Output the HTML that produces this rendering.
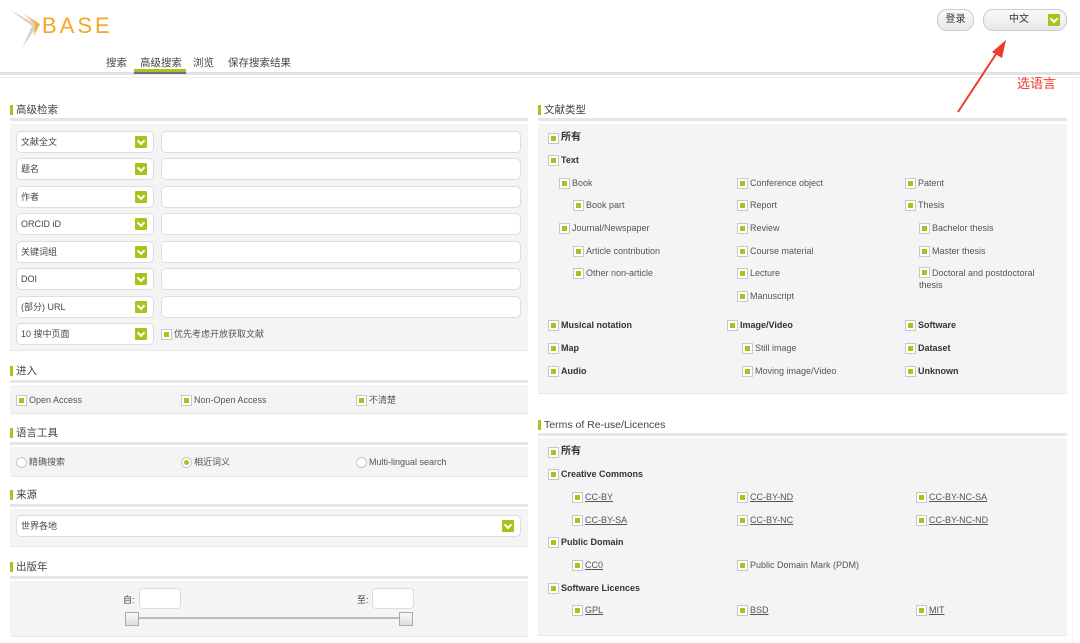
<!DOCTYPE html>
<html><head><meta charset="utf-8"><style>
*{margin:0;padding:0;box-sizing:border-box}
body{width:1080px;height:643px;position:relative;overflow:hidden;background:#fff;font-family:"Liberation Sans","Noto Sans CJK SC",sans-serif;color:#444;font-size:9px}
.a{position:absolute;white-space:nowrap}
.t{position:absolute;font-size:10.5px;color:#444;padding-left:6px;line-height:12px}
.t:before{content:"";position:absolute;left:0;top:1px;width:3px;height:10px;background:#a8c41c}
.band{position:absolute;height:3px;background:#e6e6e6}
.pan{position:absolute;background:#f4f4f4;border-bottom:1px solid #e8e8e8}
.sel{position:absolute;left:16px;width:138px;height:22px;background:#fff;border:1px solid #ddd;border-radius:5px;font-size:9px;line-height:20px;padding-left:4px;color:#444}
.sel i,.dd{position:absolute;right:6px;top:4px;width:12px;height:12px;background:#a8c41c;border-radius:1px}
.sel i:after,.dd:after{content:"";position:absolute;left:3px;top:2px;width:4px;height:4px;border-right:2px solid #fff;border-bottom:2px solid #fff;transform:rotate(45deg)}
.inp{position:absolute;left:161px;width:360px;height:22px;background:#fff;border:1px solid #ddd;border-radius:5px}
.c{position:absolute;white-space:nowrap;padding-left:13px;line-height:10px;font-size:9px;color:#555}
.c:before{content:"";position:absolute;left:0;top:0;width:9px;height:9px;border:1px solid #c8c8c8;background:#fff}
.c:after{content:"";position:absolute;left:3px;top:3px;width:5px;height:5px;background:#a8c41c}
.b{font-weight:bold;color:#333}
.u{text-decoration:underline}
.r{position:absolute;white-space:nowrap;padding-left:13px;line-height:10px;font-size:9px;color:#555}
.r:before{content:"";position:absolute;left:0;top:0;width:9px;height:9px;border:1px solid #c8c8c8;border-radius:50%;background:#fff}
.r.on:after{content:"";position:absolute;left:3px;top:3px;width:5px;height:5px;border-radius:50%;background:#a8c41c}
.btn{position:absolute;background:linear-gradient(#fafafa,#e8e8e8);border:1px solid #ccc;border-radius:10px;font-size:10px;color:#333;text-align:center;line-height:20px}
.yi{position:absolute;width:42px;height:21px;background:#fff;border:1px solid #ddd;border-radius:4px}
.h{position:absolute;width:14px;height:14px;border:1px solid #aaa;background:linear-gradient(#fafafa,#ddd)}
</style></head><body>
<!-- logo -->
<svg class="a" style="left:8px;top:8px" width="36" height="42" viewBox="0 0 36 42">
<polygon points="2,2 30,17 14,40 24,18" fill="#d4d4d4"/>
<polygon points="16,6 32,16 26,28 27,16" fill="#f5a623" opacity=".85"/>
</svg>
<div class="a" style="left:42px;top:13px;font-size:22px;color:#f5a623;letter-spacing:3px;font-family:'Liberation Sans',sans-serif">BASE</div>
<div class="a" style="left:106px;top:55px;font-size:10.5px;color:#444">搜索</div>
<div class="a" style="left:140px;top:55px;font-size:10.5px;color:#444">高级搜索</div>
<div class="a" style="left:193px;top:55px;font-size:10.5px;color:#444">浏览</div>
<div class="a" style="left:228px;top:55px;font-size:10.5px;color:#444">保存搜索结果</div>
<div class="a" style="left:134px;top:69px;width:52px;height:3px;background:#a8c41c"></div>
<div class="a" style="left:0;top:72px;width:1080px;height:3px;background:#e3e3e3"></div>
<div class="a" style="left:134px;top:72px;width:52px;height:2px;background:#6b7280"></div>
<div class="a" style="left:0;top:77px;width:1080px;height:1px;background:#eee"></div>
<div class="btn" style="left:937px;top:9px;width:37px;height:22px">登录</div>
<div class="btn" style="left:983px;top:9px;width:84px;height:22px;padding-right:12px">中文<span class="dd" style="top:4px;right:6px"></span></div>
<svg class="a" style="left:950px;top:36px" width="70" height="80"><line x1="8" y1="76" x2="50" y2="12" stroke="#f03a2a" stroke-width="2"/><polygon points="56,4 52,22 42,16" fill="#f03a2a"/></svg>
<div class="a" style="left:1017px;top:73px;font-size:13px;color:#f03a2a">选语言</div>
<div class="a" style="left:1072px;top:78px;width:1px;height:565px;background:#f2f2f2"></div>

<!-- left: advanced -->
<div class="t" style="left:10px;top:104px">高级检索</div>
<div class="band" style="left:10px;top:118px;width:518px"></div>
<div class="pan" style="left:10px;top:124px;width:518px;height:227px"></div>
<div class="sel" style="top:131px">文献全文<i></i></div><div class="inp" style="top:131px"></div>
<div class="sel" style="top:158px">题名<i></i></div><div class="inp" style="top:158px"></div>
<div class="sel" style="top:186px">作者<i></i></div><div class="inp" style="top:186px"></div>
<div class="sel" style="top:213px">ORCID iD<i></i></div><div class="inp" style="top:213px"></div>
<div class="sel" style="top:241px">关键词组<i></i></div><div class="inp" style="top:241px"></div>
<div class="sel" style="top:268px">DOI<i></i></div><div class="inp" style="top:268px"></div>
<div class="sel" style="top:296px">(部分) URL<i></i></div><div class="inp" style="top:296px"></div>
<div class="sel" style="top:323px">10 搜中页面<i></i></div>
<div class="c" style="left:161px;top:329px">优先考虑开放获取文献</div>

<div class="t" style="left:10px;top:365px">进入</div>
<div class="band" style="left:10px;top:380px;width:518px"></div>
<div class="pan" style="left:10px;top:385px;width:518px;height:29px"></div>
<div class="c" style="left:16px;top:395px">Open Access</div>
<div class="c" style="left:181px;top:395px">Non-Open Access</div>
<div class="c" style="left:356px;top:395px">不清楚</div>

<div class="t" style="left:10px;top:427px">语言工具</div>
<div class="band" style="left:10px;top:442px;width:518px"></div>
<div class="pan" style="left:10px;top:447px;width:518px;height:30px"></div>
<div class="r" style="left:16px;top:457px">精确搜索</div>
<div class="r on" style="left:181px;top:457px">相近词义</div>
<div class="r" style="left:356px;top:457px">Multi-lingual search</div>

<div class="t" style="left:10px;top:489px">来源</div>
<div class="band" style="left:10px;top:504px;width:518px"></div>
<div class="pan" style="left:10px;top:509px;width:518px;height:38px"></div>
<div class="sel" style="top:515px;width:505px">世界各地<i></i></div>

<div class="t" style="left:10px;top:561px">出版年</div>
<div class="band" style="left:10px;top:576px;width:518px"></div>
<div class="pan" style="left:10px;top:581px;width:518px;height:56px"></div>
<div class="a" style="left:123px;top:593px;font-size:9px">自:</div>
<div class="yi" style="left:139px;top:588px"></div>
<div class="a" style="left:357px;top:593px;font-size:9px">至:</div>
<div class="yi" style="left:372px;top:588px"></div>
<div class="a" style="left:132px;top:617px;width:270px;height:2px;background:#bbb"></div>
<div class="h" style="left:125px;top:612px"></div>
<div class="h" style="left:399px;top:612px"></div>

<!-- right -->
<div class="t" style="left:538px;top:104px">文献类型</div>
<div class="band" style="left:538px;top:118px;width:529px"></div>
<div class="pan" style="left:538px;top:124px;width:529px;height:270px"></div>
<div class="c b" style="left:548px;top:133px;font-size:10px;line-height:10px">所有</div>
<div class="c b" style="left:548px;top:155px">Text</div>
<div class="c" style="left:559px;top:178px">Book</div>
<div class="c" style="left:737px;top:178px">Conference object</div>
<div class="c" style="left:905px;top:178px">Patent</div>
<div class="c" style="left:573px;top:200px">Book part</div>
<div class="c" style="left:737px;top:200px">Report</div>
<div class="c" style="left:905px;top:200px">Thesis</div>
<div class="c" style="left:559px;top:223px">Journal/Newspaper</div>
<div class="c" style="left:737px;top:223px">Review</div>
<div class="c" style="left:919px;top:223px">Bachelor thesis</div>
<div class="c" style="left:573px;top:246px">Article contribution</div>
<div class="c" style="left:737px;top:246px">Course material</div>
<div class="c" style="left:919px;top:246px">Master thesis</div>
<div class="c" style="left:573px;top:268px">Other non-article</div>
<div class="c" style="left:737px;top:268px">Lecture</div>
<div class="c" style="left:919px;top:267px;line-height:12px">Doctoral and postdoctoral<br><span style="margin-left:-13px">thesis</span></div>
<div class="c" style="left:737px;top:291px">Manuscript</div>
<div class="c b" style="left:548px;top:320px">Musical notation</div>
<div class="c b" style="left:727px;top:320px">Image/Video</div>
<div class="c b" style="left:905px;top:320px">Software</div>
<div class="c b" style="left:548px;top:343px">Map</div>
<div class="c" style="left:742px;top:343px">Still image</div>
<div class="c b" style="left:905px;top:343px">Dataset</div>
<div class="c b" style="left:548px;top:366px">Audio</div>
<div class="c" style="left:742px;top:366px">Moving image/Video</div>
<div class="c b" style="left:905px;top:366px">Unknown</div>

<div class="t" style="left:538px;top:419px">Terms of Re-use/Licences</div>
<div class="band" style="left:538px;top:433px;width:529px"></div>
<div class="pan" style="left:538px;top:438px;width:529px;height:198px"></div>
<div class="c b" style="left:548px;top:447px;font-size:10px">所有</div>
<div class="c b" style="left:548px;top:469px">Creative Commons</div>
<div class="c u" style="left:572px;top:492px">CC-BY</div>
<div class="c u" style="left:737px;top:492px">CC-BY-ND</div>
<div class="c u" style="left:916px;top:492px">CC-BY-NC-SA</div>
<div class="c u" style="left:572px;top:515px">CC-BY-SA</div>
<div class="c u" style="left:737px;top:515px">CC-BY-NC</div>
<div class="c u" style="left:916px;top:515px">CC-BY-NC-ND</div>
<div class="c b" style="left:548px;top:537px">Public Domain</div>
<div class="c u" style="left:572px;top:560px">CC0</div>
<div class="c" style="left:737px;top:560px">Public Domain Mark (PDM)</div>
<div class="c b" style="left:548px;top:583px">Software Licences</div>
<div class="c u" style="left:572px;top:605px">GPL</div>
<div class="c u" style="left:737px;top:605px">BSD</div>
<div class="c u" style="left:916px;top:605px">MIT</div>
</body></html>
